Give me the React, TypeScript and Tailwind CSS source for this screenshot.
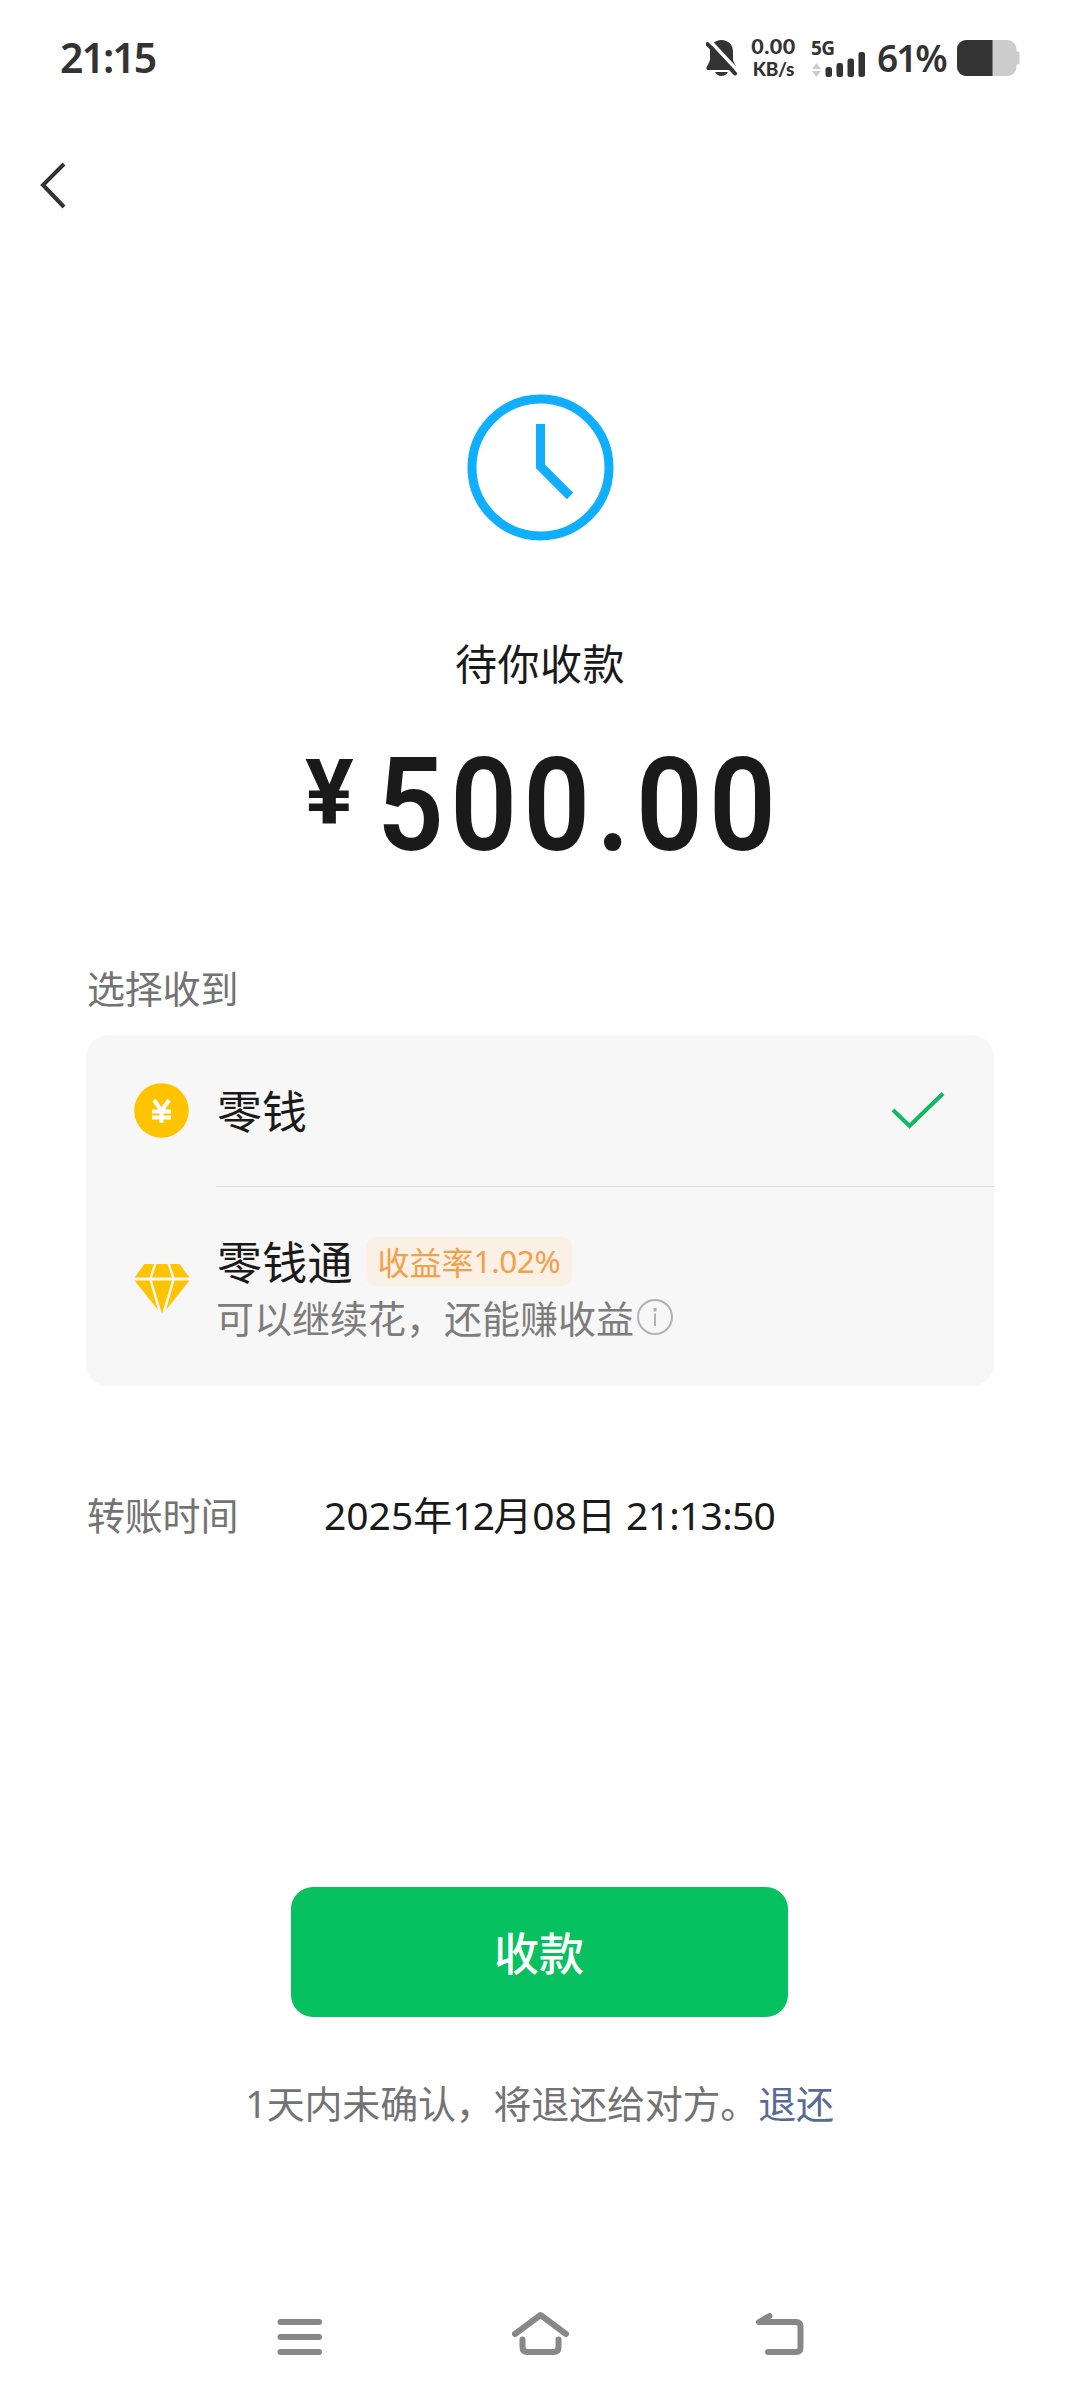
import type { ReactNode } from 'react';

function StatusBar() {
  return (
    <header className="flex h-[112px] items-start justify-between pl-[60px] pr-[60px] text-[#333333]">
      <span className="mt-[27px] text-[41px] leading-[60px] font-semibold tracking-[-2px] font-['Noto_Sans',sans-serif]">
        21:15
      </span>
      <div className="flex items-start">
        {/* Muted bell */}
        <svg className="mt-[39px] h-[38px] w-[32px]" viewBox="0 0 32 38">
          <path
            d="M15.500 1C8.500 1 4 6 4 12.500V20c0 3-3.500 7-3.500 9.500 0 1 .8 1.500 1.800 1.500h26.400c1 0 1.800-.5 1.800-1.500C30.500 27 27 23 27 20v-7.500C27 6 22.500 1 15.500 1z"
            fill="currentColor"
          />
          <path d="M9 33h13c-1.500 2.600-3.700 4-6.500 4s-5-1.400-6.500-4z" fill="currentColor" />
          <path d="M4 2l28 30" stroke="#ffffff" strokeWidth="3.500" />
          <path d="M1.500 5l27.500 29.500" stroke="currentColor" strokeWidth="4" strokeLinecap="round" />
        </svg>
        <div className="mt-[35px] ml-[11px] flex w-[49px] flex-col items-center font-['Lato',sans-serif] font-black whitespace-nowrap">
          <span className="h-[22px] text-[21.5px] leading-[22px] tracking-[0.5px]">0.00</span>
          <span className="text-[19px] leading-[24px] tracking-[-0.2px]">KB/s</span>
        </div>
        <div className="mt-[38px] ml-[13px] flex w-[57px] flex-col">
          <span className="h-[14px] text-[19px] leading-[20px] font-bold tracking-[-0.5px] font-['Noto_Sans',sans-serif]">
            5G
          </span>
          <svg className="h-[25px] w-[56px]" viewBox="0 0 56 25">
            <path d="M1 17l4.500-6 4.500 6zM1 19l4.500 6L10 19z" fill="#cccccc" />
            <rect x="14.500" y="15" width="6.500" height="10" rx="2.500" fill="currentColor" />
            <rect x="25.500" y="11" width="6.500" height="14" rx="2.500" fill="currentColor" />
            <rect x="36.500" y="6.500" width="6.500" height="18.500" rx="2.500" fill="currentColor" />
            <rect x="47.500" y="0" width="6.500" height="25" rx="2.500" fill="currentColor" />
          </svg>
        </div>
        <span className="mt-[28px] ml-[9px] w-[73px] text-[37px] leading-[60px] font-semibold tracking-[-2px] whitespace-nowrap font-['Noto_Sans',sans-serif]">
          61%
        </span>
        <svg className="mt-[40px] ml-[7px] h-[36px] w-[63px]" viewBox="0 0 63 36">
          <rect x="0" y="0" width="59.500" height="36" rx="9" fill="#cccccc" />
          <path d="M59 11.500h1.500a2 2 0 012 2v9a2 2 0 01-2 2H59z" fill="#cccccc" />
          <path d="M9 0h26.500v36H9a9 9 0 01-9-9V9a9 9 0 019-9z" fill="currentColor" />
        </svg>
      </div>
    </header>
  );
}

function ClockIcon() {
  return (
    <svg className="h-[148px] w-[148px]" viewBox="0 0 148 148" fill="none" stroke="#10aeff" strokeWidth="9">
      <circle cx="74.500" cy="74.500" r="68.500" />
      <path d="M74.500 31v42.500L104 103" />
    </svg>
  );
}

function CoinIcon() {
  return (
    <svg className="h-[56px] w-[56px]" viewBox="0 0 56 56" fill="none">
      <circle cx="27.500" cy="27.500" r="27.300" fill="#ffc300" />
      <path
        d="M20 17l7.500 11L35 17M27.500 27v13M18 28.500h19M18 34.500h19"
        stroke="#ffffff"
        strokeWidth="4"
      />
    </svg>
  );
}

function DiamondIcon() {
  return (
    <svg className="h-[50px] w-[56px]" viewBox="0 0 56 50" fill="#ffc300">
      <path d="M10.500 0H20l-4.500 13.500H.5z" />
      <path d="M22.500 0h11l4.500 13.500H18z" />
      <path d="M36 0h9.500l10 13.500h-15z" />
      <path d="M.5 16.500h15L24 46z" />
      <path d="M18 16.500h20L28 50z" />
      <path d="M40.500 16.500h15L32 46z" />
    </svg>
  );
}

interface AccountRowProps {
  icon: ReactNode;
  children: ReactNode;
  className?: string;
}

function AccountRow({ icon, children, className = '' }: AccountRowProps) {
  return (
    <div className={`flex items-center pl-[48px] ${className}`}>
      {icon}
      <div className="ml-[26px] flex-1 self-stretch">{children}</div>
    </div>
  );
}

function NavBar() {
  return (
    <nav className="mt-[179px] flex justify-between pr-[273px] pl-[274px]">
      <svg className="h-[48px] w-[52px]" viewBox="0 0 52 48" stroke="#888888" strokeWidth="6" strokeLinecap="round">
        <path d="M6.500 12h38.500M6.500 27h38.500M6.500 42h38.500" />
      </svg>
      <svg
        className="h-[48px] w-[60px]"
        viewBox="0 0 60 48"
        fill="none"
        stroke="#888888"
        strokeWidth="6"
        strokeLinecap="round"
        strokeLinejoin="round"
      >
        <path d="M4 24L29.500 5 55 24" />
        <path d="M11.500 29.500V37q0 5 5 5h26q5 0 5-5v-7.500" />
      </svg>
      <svg
        className="h-[48px] w-[52px]"
        viewBox="0 0 52 48"
        fill="none"
        stroke="#888888"
        strokeWidth="6"
        strokeLinecap="round"
        strokeLinejoin="round"
      >
        <path d="M14.500 6L4 12h37q4.500 0 4.500 4.500v21q0 4.500-4.500 4.500H13" />
      </svg>
    </nav>
  );
}

export default function App() {
  return (
    <div className="flex h-[2400px] w-[1080px] flex-col overflow-hidden bg-white text-[#1a1a1a] font-['Noto_Sans_CJK_SC',sans-serif]">
      <StatusBar />

      <div className="flex h-[148px] items-center pl-[40px]">
        <svg className="h-[48px] w-[28px]" viewBox="0 0 28 48" fill="none" stroke="#333333" strokeWidth="4">
          <path d="M24 2L3 23l21 22" />
        </svg>
      </div>

      <div className="mt-[133px] flex flex-col items-center">
        <ClockIcon />
        <h1 className="mt-[89px] text-[42px] leading-[64px] tracking-[0.5px]">待你收款</h1>
        <div className="mt-[47px] flex items-start self-start pl-[305px] font-['Roboto',sans-serif]">
          <span className="mt-[7px] w-[72px] text-[91px] leading-[91px] font-bold">¥</span>
          <span className="origin-left scale-x-90 text-[130px] leading-[130px] font-semibold tracking-[7px]">500.00</span>
        </div>
      </div>

      <section className="mt-[88px] px-[86px]">
        <h2 className="pl-px text-[38px] leading-[56px] tracking-[-0.2px] text-[#737373]">选择收到</h2>
        <div className="mt-[20px] h-[351px] rounded-[22px] bg-[#f7f7f7]">
          <AccountRow icon={<CoinIcon />} className="h-[152px]">
            <div className="flex h-full items-center justify-between border-b border-[#dcdcdc] pr-[49px] pb-[2px]">
              <span className="pl-px text-[45px] leading-[60px]">零钱</span>
              <svg className="h-[40px] w-[54px]" viewBox="0 0 54 40" fill="none" stroke="#10b968" strokeWidth="4">
                <path d="M2 20l16.500 16L52 3.500" />
              </svg>
            </div>
          </AccountRow>
          <AccountRow icon={<DiamondIcon />} className="h-[199px] pt-[5px]">
            <div className="flex items-center pt-[42px] pl-px">
              <span className="text-[45px] leading-[54px] tracking-[0.3px]">零钱通</span>
              <span className="ml-[13px] flex h-[49px] w-[206px] items-center justify-center rounded-[9px] bg-[#faf0e6] text-[#f2a04a]">
                <span className="text-[32px] leading-[46px] whitespace-nowrap">收益率</span>
                <span className="text-[31.5px] leading-[46px] tracking-[-0.4px] font-['Noto_Sans',sans-serif]">1.02%</span>
              </span>
            </div>
            <div className="mt-[2px] flex items-center text-[38px] leading-[54px] text-[#7d7d7d]">
              可以继续花，还能赚收益
              <svg className="ml-[3px] h-[36px] w-[36px]" viewBox="0 0 36 36" fill="none" stroke="#b2b2b2" strokeWidth="2">
                <circle cx="18" cy="18" r="17" />
                <path d="M18 14.500V27" />
                <path d="M18 9v3.500" strokeWidth="3" />
              </svg>
            </div>
          </AccountRow>
        </div>
      </section>

      <div className="mt-[100px] flex h-[56px] items-center px-[86px] leading-[56px]">
        <span className="w-[238px] pl-px text-[38px] tracking-[-0.2px] text-[#737373]">转账时间</span>
        <span className="pt-[2px] text-[39px] whitespace-nowrap font-['Noto_Sans','Noto_Sans_CJK_SC',sans-serif]">
          2025年<span className="tracking-[-1.8px]">12</span>月08日 <span className="tracking-[-0.7px]">21:13:50</span>
        </span>
      </div>

      <div className="mt-[345px] flex flex-col items-center pr-[2px]">
        <button className="h-[130px] w-[497px] rounded-[22px] bg-[#07c160] text-[45px] leading-[60px] font-medium text-white">
          收款
        </button>
        <p className="mt-[57px] pl-px text-[38px] leading-[56px] tracking-[-0.2px] text-[#737373]">
          <span className="font-['Noto_Sans',sans-serif]">1</span>天内未确认，将退还给对方。
          <span className="text-[#576b95]">退还</span>
        </p>
      </div>

      <NavBar />
    </div>
  );
}
